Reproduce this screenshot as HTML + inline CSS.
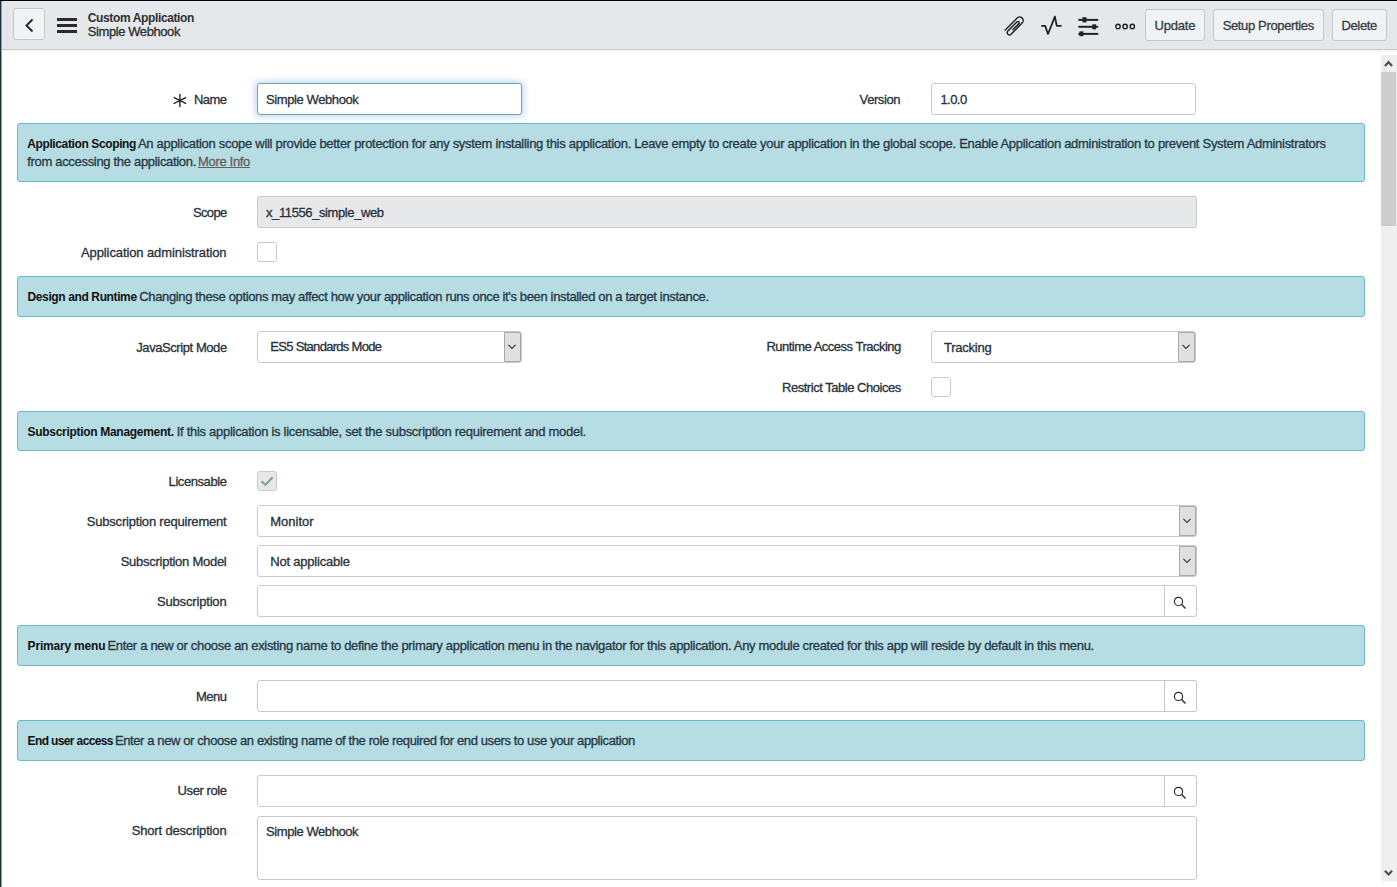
<!DOCTYPE html>
<html><head><meta charset="utf-8">
<style>
html,body{margin:0;padding:0;}
body{width:1397px;height:887px;overflow:hidden;position:relative;background:#fff;font-family:'Liberation Sans',sans-serif;}
.a{position:absolute;box-sizing:border-box;}
.t{position:absolute;white-space:nowrap;line-height:16px;-webkit-text-stroke:0.3px currentColor;font-family:'Liberation Sans',sans-serif;}
.inp{position:absolute;box-sizing:border-box;border:1px solid #c9c9c9;border-radius:3px;background:#fff;}
.pnl{position:absolute;box-sizing:border-box;left:17px;width:1348px;border:1px solid #6cb8cb;border-radius:3px;background:#b6dde4;}
.cb{position:absolute;box-sizing:border-box;width:20px;height:20px;border:1px solid #c9c9c9;border-radius:3px;background:#fff;}
.btn{position:absolute;box-sizing:border-box;top:9px;height:32px;border:1px solid #c6c8ca;border-radius:3px;background:#f1f2f4;}
.sel{position:absolute;box-sizing:border-box;border:1px solid #c9c9c9;border-radius:3px;background:#fff;}
.selb{position:absolute;box-sizing:border-box;top:0;right:0;width:17px;height:100%;background:#e0e0e0;border:1px solid #a9a9a9;border-radius:0 2px 2px 0;}
.srch{position:absolute;top:-1px;right:-1px;width:33px;bottom:-1px;box-sizing:border-box;border:1px solid #c9c9c9;border-radius:0 3px 3px 0;background:#fff;}
</style></head><body>
<!-- frame borders -->
<div class="a" style="left:0;top:0;width:1397px;height:1px;background:#000"></div>
<div class="a" style="left:0;top:1px;width:1px;height:886px;background:#1f333b"></div>
<div class="a" style="left:1px;top:1px;width:1px;height:886px;background:#74ad98"></div>
<!-- header -->
<div class="a" style="left:2px;top:1px;width:1395px;height:49px;background:#e4e8eb;border-bottom:1px solid #c9cbcd"></div>
<div class="a" style="left:2px;top:50px;width:1395px;height:3px;background:linear-gradient(#f2f2f2,#fff)"></div>
<div class="btn" style="left:13px;top:8px;width:32px"></div>
<svg class="a" style="left:0;top:0" width="1397" height="50">
  <path d="M32.5 19.5 L26.4 25.5 L32.5 31.5" fill="none" stroke="#222" stroke-width="1.8"/>
  <rect x="57" y="18" width="20" height="3" fill="#2b2b2b"/>
  <rect x="57" y="24" width="20" height="3" fill="#2b2b2b"/>
  <rect x="57" y="30" width="20" height="3" fill="#2b2b2b"/>
</svg>
<div class="btn" style="left:1145px;width:60px"></div>
<div class="btn" style="left:1213px;width:111px"></div>
<div class="btn" style="left:1332px;width:55px"></div>
<!-- header icons -->
<svg class="a" style="left:1000px;top:12px" width="140" height="28">
  <g transform="translate(13.9 14.3) rotate(-45)" fill="none" stroke="#222" stroke-width="1.45">
    <path d="M-9.4 -3.5 L8.2 -3.5 A3.5 3.5 0 0 1 8.2 3.5 L-7.6 3.5 A2.2 2.2 0 0 1 -7.6 -0.9 L5.4 -0.9 A1.25 1.25 0 0 1 5.4 1.6 L-3.6 1.6"/>
  </g>
  <path d="M41.2 13.9 H45.2 L48 22 L54.9 4.6 L56.8 13.9 H61.6" fill="none" stroke="#222" stroke-width="1.8" stroke-linejoin="round"/>
  <g stroke="#222" stroke-width="2">
    <path d="M78.4 7.9 H98.2"/><path d="M78.4 14.8 H98.2"/><path d="M78.4 21.9 H98.2"/>
  </g>
  <g fill="#222">
    <rect x="82.5" y="5.2" width="4" height="5.2"/>
    <rect x="92.3" y="12.3" width="3.8" height="5"/>
    <rect x="79.4" y="19.4" width="4" height="4.8"/>
  </g>
  <g fill="none" stroke="#222" stroke-width="1.4">
    <circle cx="118" cy="14.5" r="2.2"/><circle cx="125.1" cy="14.5" r="2.2"/><circle cx="132.3" cy="14.5" r="2.2"/>
  </g>
</svg>
<!-- scrollbar -->
<div class="a" style="left:1381px;top:55px;width:16px;height:826px;background:#efefef"></div>
<div class="a" style="left:1381px;top:72px;width:15px;height:154px;background:#cccccc"></div>
<svg class="a" style="left:1381px;top:55px" width="16" height="17"><path d="M3.9 10.9 L7.5 7.2 L11.1 10.9" fill="none" stroke="#505050" stroke-width="2.2"/></svg>
<svg class="a" style="left:1381px;top:864px" width="16" height="17"><path d="M3.9 6.7 L7.5 10.4 L11.1 6.7" fill="none" stroke="#505050" stroke-width="2.2"/></svg>
<!-- fields -->
<div class="inp" style="left:257px;top:83px;width:265px;height:32px;border-color:#78a696;box-shadow:0 0 6px 2px rgba(110,165,240,0.42)"></div>
<svg class="a" style="left:170px;top:92px" width="20" height="18"><g stroke="#222" stroke-width="1.4"><path d="M9.9 1.9 V14.9"/><path d="M3.65 5.3 L16.1 11.6"/><path d="M3.65 11.6 L16.1 5.3"/></g></svg>
<div class="inp" style="left:931px;top:83px;width:265px;height:32px"></div>
<div class="pnl" style="top:123px;height:59px"></div>
<div class="inp" style="left:257px;top:196px;width:940px;height:32px;background:#e6e8ea"></div>
<div class="cb" style="left:257px;top:242px"></div>
<div class="pnl" style="top:276px;height:41px"></div>
<div class="sel" style="left:257px;top:331px;width:265px;height:32px"><div class="selb"><svg style="position:absolute;left:0;top:0" width="15" height="28"><path d="M3.4 11.9 L7 15.4 L10.6 11.9" fill="none" stroke="#333" stroke-width="1.05"/></svg></div></div>
<div class="sel" style="left:931px;top:331px;width:265px;height:32px"><div class="selb"><svg style="position:absolute;left:0;top:0" width="15" height="28"><path d="M3.4 11.9 L7 15.4 L10.6 11.9" fill="none" stroke="#333" stroke-width="1.05"/></svg></div></div>
<div class="cb" style="left:931px;top:377px"></div>
<div class="pnl" style="top:411px;height:40px"></div>
<div class="cb" style="left:257px;top:471px;background:#e6e8ea"></div>
<svg class="a" style="left:257px;top:471px" width="20" height="20"><path d="M4.4 10.2 L8.4 13.8 L15.6 6.3" fill="none" stroke="#74a893" stroke-width="2"/></svg>
<div class="sel" style="left:257px;top:505px;width:940px;height:32px"><div class="selb"><svg style="position:absolute;left:0;top:0" width="15" height="28"><path d="M3.4 11.9 L7 15.4 L10.6 11.9" fill="none" stroke="#333" stroke-width="1.05"/></svg></div></div>
<div class="sel" style="left:257px;top:545px;width:940px;height:32px"><div class="selb"><svg style="position:absolute;left:0;top:0" width="15" height="28"><path d="M3.4 11.9 L7 15.4 L10.6 11.9" fill="none" stroke="#333" stroke-width="1.05"/></svg></div></div>
<div class="inp" style="left:257px;top:585px;width:940px;height:32px"><div class="srch"><svg style="position:absolute;left:0;top:0" width="31" height="30"><circle cx="13.5" cy="15.4" r="4.1" fill="none" stroke="#2b2b2b" stroke-width="1.15"/><path d="M16.4 18.3 L20.5 22.4" stroke="#2b2b2b" stroke-width="1.4"/></svg></div></div>
<div class="pnl" style="top:625px;height:41px"></div>
<div class="inp" style="left:257px;top:680px;width:940px;height:32px"><div class="srch"><svg style="position:absolute;left:0;top:0" width="31" height="30"><circle cx="13.5" cy="15.4" r="4.1" fill="none" stroke="#2b2b2b" stroke-width="1.15"/><path d="M16.4 18.3 L20.5 22.4" stroke="#2b2b2b" stroke-width="1.4"/></svg></div></div>
<div class="pnl" style="top:720px;height:41px"></div>
<div class="inp" style="left:257px;top:775px;width:940px;height:32px"><div class="srch"><svg style="position:absolute;left:0;top:0" width="31" height="30"><circle cx="13.5" cy="15.4" r="4.1" fill="none" stroke="#2b2b2b" stroke-width="1.15"/><path d="M16.4 18.3 L20.5 22.4" stroke="#2b2b2b" stroke-width="1.4"/></svg></div></div>
<div class="inp" style="left:257px;top:816px;width:940px;height:64px"></div>

<div class="t" style="left:87.8px;top:10px;font-size:12px;font-weight:700;color:#2e2e2e;letter-spacing:-0.372px;-webkit-text-stroke:0;">Custom Application</div>
<div class="t" style="left:87.8px;top:24px;font-size:13px;font-weight:400;color:#2e2e2e;letter-spacing:-0.418px;">Simple Webhook</div>
<div class="t" style="left:1154.6px;top:18px;font-size:13px;font-weight:400;color:#343d47;letter-spacing:-0.220px;">Update</div>
<div class="t" style="left:1222.7px;top:18px;font-size:13px;font-weight:400;color:#343d47;letter-spacing:-0.359px;">Setup Properties</div>
<div class="t" style="left:1341.4px;top:18px;font-size:13px;font-weight:400;color:#343d47;letter-spacing:-0.330px;">Delete</div>
<div class="t" style="left:194.0px;top:92px;font-size:13px;font-weight:400;color:#28313b;letter-spacing:-0.547px;">Name</div>
<div class="t" style="left:859.6px;top:92px;font-size:13px;font-weight:400;color:#28313b;letter-spacing:-0.411px;">Version</div>
<div class="t" style="left:266.0px;top:92px;font-size:13px;font-weight:400;color:#28313b;letter-spacing:-0.403px;">Simple Webhook</div>
<div class="t" style="left:940.4px;top:92px;font-size:13px;font-weight:400;color:#28313b;letter-spacing:-0.544px;">1.0.0</div>
<div class="t" style="left:193.0px;top:205px;font-size:13px;font-weight:400;color:#28313b;letter-spacing:-0.675px;">Scope</div>
<div class="t" style="left:266.0px;top:205px;font-size:13px;font-weight:400;color:#28313b;letter-spacing:-0.394px;">x_11556_simple_web</div>
<div class="t" style="left:81.0px;top:245px;font-size:13px;font-weight:400;color:#28313b;letter-spacing:-0.102px;">Application administration</div>
<div class="t" style="left:136.3px;top:340px;font-size:13px;font-weight:400;color:#28313b;letter-spacing:-0.429px;">JavaScript Mode</div>
<div class="t" style="left:270.3px;top:339px;font-size:13px;font-weight:400;color:#28313b;letter-spacing:-0.699px;">ES5 Standards Mode</div>
<div class="t" style="left:766.4px;top:339px;font-size:13px;font-weight:400;color:#28313b;letter-spacing:-0.502px;">Runtime Access Tracking</div>
<div class="t" style="left:944.0px;top:340px;font-size:13px;font-weight:400;color:#28313b;letter-spacing:-0.247px;">Tracking</div>
<div class="t" style="left:782.0px;top:380px;font-size:13px;font-weight:400;color:#28313b;letter-spacing:-0.468px;">Restrict Table Choices</div>
<div class="t" style="left:168.6px;top:474px;font-size:13px;font-weight:400;color:#28313b;letter-spacing:-0.426px;">Licensable</div>
<div class="t" style="left:86.8px;top:514px;font-size:13px;font-weight:400;color:#28313b;letter-spacing:-0.201px;">Subscription requirement</div>
<div class="t" style="left:270.2px;top:514px;font-size:13px;font-weight:400;color:#28313b;letter-spacing:0.020px;">Monitor</div>
<div class="t" style="left:120.7px;top:554px;font-size:13px;font-weight:400;color:#28313b;letter-spacing:-0.265px;">Subscription Model</div>
<div class="t" style="left:270.2px;top:554px;font-size:13px;font-weight:400;color:#28313b;letter-spacing:-0.199px;">Not applicable</div>
<div class="t" style="left:157.0px;top:594px;font-size:13px;font-weight:400;color:#28313b;letter-spacing:-0.171px;">Subscription</div>
<div class="t" style="left:196.0px;top:689px;font-size:13px;font-weight:400;color:#28313b;letter-spacing:-0.508px;">Menu</div>
<div class="t" style="left:177.6px;top:783px;font-size:13px;font-weight:400;color:#28313b;letter-spacing:-0.417px;">User role</div>
<div class="t" style="left:131.7px;top:823px;font-size:13px;font-weight:400;color:#28313b;letter-spacing:-0.162px;">Short description</div>
<div class="t" style="left:266.0px;top:824px;font-size:13px;font-weight:400;color:#28313b;letter-spacing:-0.418px;">Simple Webhook</div>
<div class="t" style="left:27.2px;top:136px;font-size:12px;font-weight:700;color:#111111;letter-spacing:-0.379px;-webkit-text-stroke:0;">Application Scoping</div>
<div class="t" style="left:137.9px;top:136px;font-size:13px;font-weight:400;color:#263844;letter-spacing:-0.294px;">An application scope will provide better protection for any system installing this application. Leave empty to create your application in the global scope. Enable Application administration to prevent System Administrators</div>
<div class="t" style="left:27.2px;top:154px;font-size:13px;font-weight:400;color:#263844;letter-spacing:-0.312px;">from accessing the application.</div>
<div class="t" style="left:198.0px;top:154px;font-size:13px;font-weight:400;color:#675f5c;letter-spacing:-0.325px;text-decoration:underline;">More Info</div>
<div class="t" style="left:27.5px;top:289px;font-size:12px;font-weight:700;color:#111111;letter-spacing:-0.379px;-webkit-text-stroke:0;">Design and Runtime</div>
<div class="t" style="left:139.3px;top:289px;font-size:13px;font-weight:400;color:#263844;letter-spacing:-0.356px;">Changing these options may affect how your application runs once it&#x27;s been installed on a target instance.</div>
<div class="t" style="left:27.5px;top:424px;font-size:12px;font-weight:700;color:#111111;letter-spacing:-0.298px;-webkit-text-stroke:0;">Subscription Management.</div>
<div class="t" style="left:176.7px;top:424px;font-size:13px;font-weight:400;color:#263844;letter-spacing:-0.285px;">If this application is licensable, set the subscription requirement and model.</div>
<div class="t" style="left:27.6px;top:638px;font-size:12px;font-weight:700;color:#111111;letter-spacing:-0.196px;-webkit-text-stroke:0;">Primary menu</div>
<div class="t" style="left:107.4px;top:638px;font-size:13px;font-weight:400;color:#263844;letter-spacing:-0.316px;">Enter a new or choose an existing name to define the primary application menu in the navigator for this application. Any module created for this app will reside by default in this menu.</div>
<div class="t" style="left:27.6px;top:733px;font-size:12px;font-weight:700;color:#111111;letter-spacing:-0.629px;-webkit-text-stroke:0;">End user access</div>
<div class="t" style="left:114.9px;top:733px;font-size:13px;font-weight:400;color:#263844;letter-spacing:-0.390px;">Enter a new or choose an existing name of the role required for end users to use your application</div>
</body></html>
